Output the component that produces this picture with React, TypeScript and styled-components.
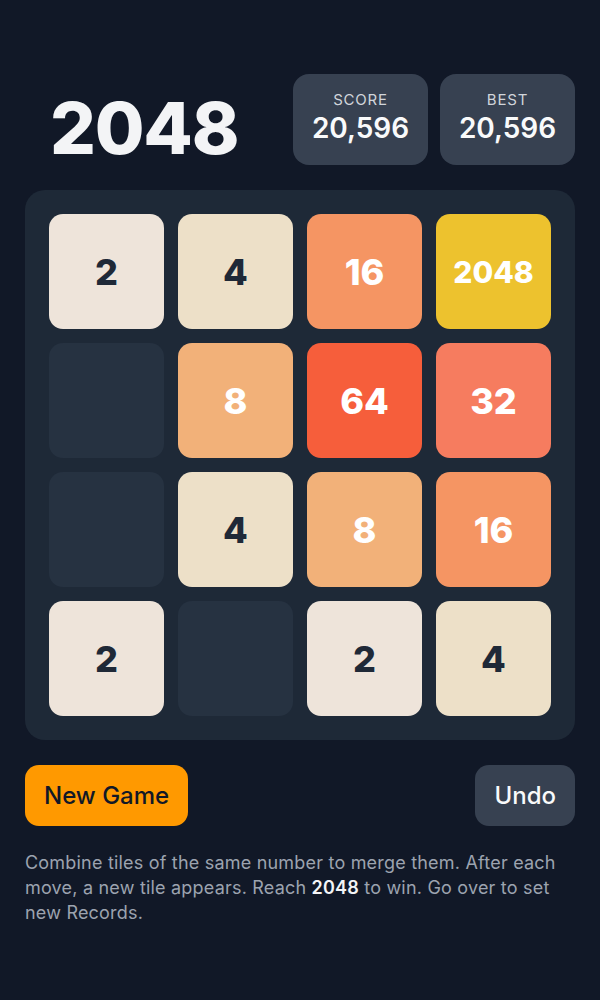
import React from 'react';
import styled, { createGlobalStyle } from 'styled-components';

// --- Global ---
const GlobalStyle = createGlobalStyle`
  html, body {
    margin: 0;
    padding: 0;
    background: #111827;
  }
  body {
    font-family: Inter, "Noto Sans", "Liberation Sans", sans-serif;
    -webkit-font-smoothing: antialiased;
  }
`;

// --- Styled Components ---
const Page = styled.div`
  width: 600px;
  min-height: 1000px;
  box-sizing: border-box;
  padding: 74px 25px 0;
  background: #111827;
`;

const Header = styled.header`
  display: flex;
  align-items: center;
  justify-content: space-between;
`;

const Title = styled.h1`
  margin: 0 0 0 25px;
  font-size: 72px;
  font-weight: 800;
  letter-spacing: -1.2px;
  color: #f3f4f6;
  line-height: 1;
  padding-top: 16px;
`;

const Scores = styled.div`
  display: flex;
  gap: 12px;
`;

const ScoreBox = styled.div`
  width: 135px;
  height: 91px;
  box-sizing: border-box;
  padding-bottom: 4px;
  border-radius: 16px;
  background: #374151;
  display: flex;
  flex-direction: column;
  align-items: center;
  justify-content: center;
  gap: 2px;
`;

const ScoreLabel = styled.span`
  font-size: 15px;
  letter-spacing: 0.8px;
  text-transform: uppercase;
  color: #d1d5db;
`;

const ScoreValue = styled.span`
  font-size: 28px;
  font-weight: 600;
  color: #f9fafb;
`;

const Board = styled.div`
  margin-top: 25px;
  padding: 24px;
  border-radius: 20px;
  background: #1e2937;
  display: grid;
  grid-template-columns: repeat(4, 115px);
  grid-auto-rows: 115px;
  gap: 14px;
`;

type TileColours = { bg: string; fg: string };

const palette: Record<number, TileColours> = {
  0: { bg: '#263241', fg: 'transparent' },
  2: { bg: '#eee4da', fg: '#1f2937' },
  4: { bg: '#ede0c8', fg: '#1f2937' },
  8: { bg: '#f2b179', fg: '#ffffff' },
  16: { bg: '#f59563', fg: '#ffffff' },
  32: { bg: '#f67c5f', fg: '#ffffff' },
  64: { bg: '#f65e3b', fg: '#ffffff' },
  2048: { bg: '#edc22e', fg: '#ffffff' },
};

const Tile = styled.div<{ $value: number }>`
  border-radius: 14px;
  display: flex;
  align-items: center;
  justify-content: center;
  font-weight: 800;
  font-size: ${p => (p.$value >= 1000 ? '30px' : '36px')};
  background: ${p => palette[p.$value].bg};
  color: ${p => palette[p.$value].fg};
`;

const Controls = styled.div`
  margin-top: 25px;
  display: flex;
  justify-content: space-between;
`;

const Button = styled.button<{ $primary?: boolean }>`
  height: 61px;
  padding: 0 19px;
  border: none;
  border-radius: 14px;
  font-family: inherit;
  font-size: 24px;
  font-weight: 500;
  cursor: pointer;
  background: ${p => (p.$primary ? '#ff9900' : '#374151')};
  color: ${p => (p.$primary ? '#111827' : '#f9fafb')};
`;

const Help = styled.p`
  margin: 24px 0 0;
  font-size: 18px;
  line-height: 25px;
  letter-spacing: 0.2px;
  color: #9ca3af;

  strong {
    color: #f3f4f6;
    font-weight: 600;
  }
`;

// --- Data ---
const grid = [
  [2, 4, 16, 2048],
  [0, 8, 64, 32],
  [0, 4, 8, 16],
  [2, 0, 2, 4],
];

// --- Component ---
export default function App() {
  return (
    <>
      <GlobalStyle />
      <Page>
        <Header>
          <Title>2048</Title>
          <Scores>
            <ScoreBox>
              <ScoreLabel>Score</ScoreLabel>
              <ScoreValue>20,596</ScoreValue>
            </ScoreBox>
            <ScoreBox>
              <ScoreLabel>Best</ScoreLabel>
              <ScoreValue>20,596</ScoreValue>
            </ScoreBox>
          </Scores>
        </Header>

        <Board>
          {grid.flat().map((v, i) => (
            <Tile key={i} $value={v}>{v || ''}</Tile>
          ))}
        </Board>

        <Controls>
          <Button $primary>New Game</Button>
          <Button>Undo</Button>
        </Controls>

        <Help>
          Combine tiles of the same number to merge them. After each move, a new tile appears. Reach <strong>2048</strong> to win. Go over to set new Records.
        </Help>
      </Page>
    </>
  );
}
